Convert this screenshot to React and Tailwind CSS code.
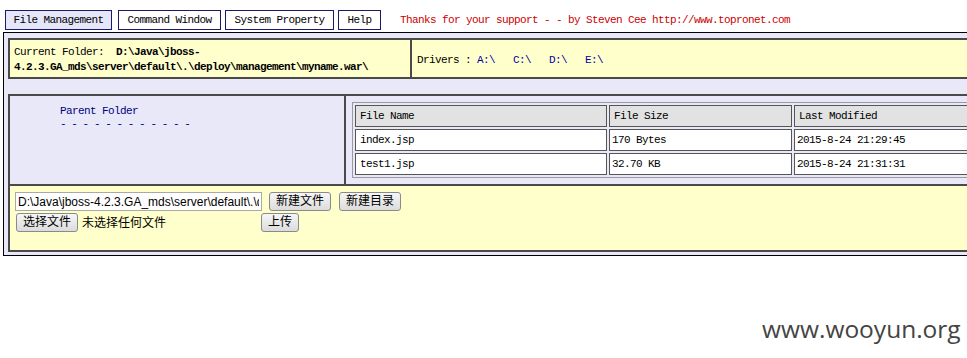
export default function App() {
  const mono = "font-['Liberation_Mono','DejaVu_Sans_Mono',monospace] text-[11px] tracking-[-0.6px]";
  const cjk = "font-['Liberation_Sans','Noto_Sans_CJK_SC',sans-serif]";
  const btn =
    "h-[19px] px-[6px] border border-[#8a8a8a] rounded-[3px] bg-gradient-to-b from-[#f6f6f6] to-[#dcdcdc] text-[12px] leading-[17px] text-black " +
    cjk;
  const tab = "h-[20px] border border-[#1a1a66] flex items-center justify-center text-black";
  return (
    <div className="relative w-[967px] h-[358px] overflow-hidden bg-white">
      <div className={"flex items-center pt-[10px] pl-[5px] " + mono}>
        <div className={tab + " w-[107px] bg-[#e6e6fa] mr-[6px]"}>File Management</div>
        <div className={tab + " w-[103px] bg-white mr-[4px]"}>Command Window</div>
        <div className={tab + " w-[109px] bg-white mr-[4px]"}>System Property</div>
        <div className={tab + " w-[43px] bg-white"}>Help</div>
        <div className="ml-[19px] text-[#cc0000]">Thanks for your support - - by Steven Cee http://www.topronet.com</div>
      </div>

      <div className={"mt-[2px] ml-[3px] w-[1010px] border border-black bg-[#e8e8f8] pt-[5px] pl-[4px] pb-[3px] " + mono}>
        <div className="flex h-[41px] border-2 border-[#4a4a4a] bg-[#ffffcc]">
          <div className="w-[402px] border-r-2 border-[#4a4a4a] px-[4px] pt-[5px] leading-[15px]">
            <div>
              Current Folder:&nbsp;&nbsp;<b>D:\Java\jboss-</b>
            </div>
            <div className="font-bold">4.2.3.GA_mds\server\default\.\deploy\management\myname.war\</div>
          </div>
          <div className="flex-1 flex items-center pl-[5px] pt-[3px]">
            <span>Drivers :&nbsp;</span>
            <span className="text-[#0000aa]">A:\</span>
            <span className="ml-[18px] text-[#0000aa]">C:\</span>
            <span className="ml-[18px] text-[#0000aa]">D:\</span>
            <span className="ml-[18px] text-[#0000aa]">E:\</span>
          </div>
        </div>

        <div className="mt-[15px] border-2 border-b-0 border-[#4a4a4a]">
          <div className="flex h-[88px]">
            <div className="w-[336px] border-r-2 border-[#4a4a4a] bg-[#e8e8f8] pl-[50px] pt-[9px] text-[#000080] leading-[13px]">
              <div>Parent Folder</div>
              <div className="tracking-[-0.95px]">- - - - - - - - - - - -</div>
            </div>
            <div className="flex-1 pl-[6px] pt-[6px]">
              <table className="border-separate border-spacing-[2px] border border-[#9a9a9a] bg-[#e8e8f8]">
                <tbody>
                  <tr className="bg-[#e2e2e2]">
                    <td className="w-[252px] h-[22px] border border-[#555] pl-[4px]">File Name</td>
                    <td className="w-[183px] h-[22px] border border-[#555] pl-[4px]">File Size</td>
                    <td className="w-[200px] h-[22px] border border-[#555] pl-[4px]">Last Modified</td>
                  </tr>
                  <tr className="bg-white">
                    <td className="h-[22px] border border-[#555] pl-[4px]">index.jsp</td>
                    <td className="h-[22px] border border-[#555] pl-[2px]">170 Bytes</td>
                    <td className="h-[22px] border border-[#555] pl-[2px]">2015-8-24 21:29:45</td>
                  </tr>
                  <tr className="bg-white">
                    <td className="h-[22px] border border-[#555] pl-[4px]">test1.jsp</td>
                    <td className="h-[22px] border border-[#555] pl-[2px]">32.70 KB</td>
                    <td className="h-[22px] border border-[#555] pl-[2px]">2015-8-24 21:31:31</td>
                  </tr>
                </tbody>
              </table>
            </div>
          </div>
          <div className="h-[68px] border-t-2 border-b-2 border-[#4a4a4a] bg-[#ffffcc] pl-[5px] pt-[6px] tracking-normal">
            <div className="flex items-center gap-[7px]">
              <input
                readOnly
                value="D:\Java\jboss-4.2.3.GA_mds\server\default\.\deploy\management\myname.war\"
                className="w-[247px] h-[19px] border border-[#a9a9a9] bg-white px-[2px] text-[12px] font-['Liberation_Sans',sans-serif] text-black outline-none"
              />
              <button className={btn}>新建文件</button>
              <button className={btn + " ml-[1px]"}>新建目录</button>
            </div>
            <div className="flex items-center mt-[2px]">
              <button className={btn + " ml-[1px]"}>选择文件</button>
              <span className={"ml-[4px] text-[12px] text-black " + cjk}>未选择任何文件</span>
              <button className={btn + " ml-[95px]"}>上传</button>
            </div>
          </div>
        </div>
      </div>

      <div className="absolute left-[762px] top-[312px] text-[24.5px] leading-[34px] text-[#444] font-['Open_Sans',sans-serif]">
        www.wooyun.org
      </div>
    </div>
  );
}
